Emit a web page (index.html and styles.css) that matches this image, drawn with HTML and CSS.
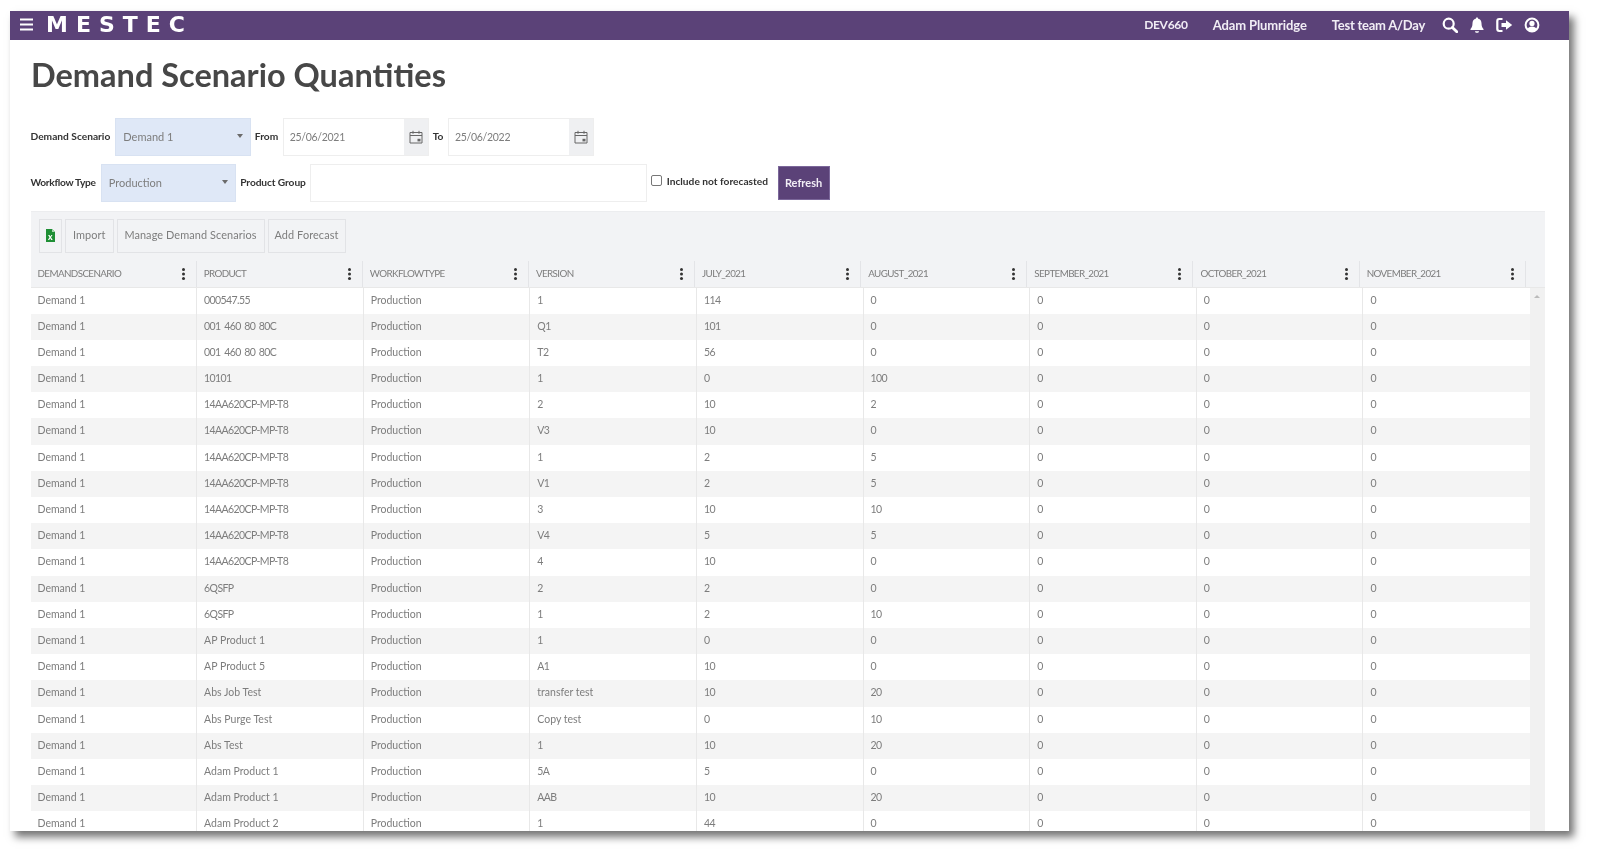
FILE: index.html
```html
<!DOCTYPE html>
<html lang="en">
<head>
<meta charset="utf-8">
<title>Demand Scenario Quantities</title>
<link rel="stylesheet" href="styles.css">
</head>
<body>
<div class="window">
  <header class="topbar">
    <svg class="burger" viewBox="0 0 13 13" width="13" height="13"><path d="M0 1.500h13M0 6.500h13M0 11.500h13" stroke="#fff" stroke-width="2"/></svg>
    <span class="logo">MESTEC</span>
    <nav class="usernav">
      <span class="nav-dev">DEV660</span>
      <span class="nav-user">Adam Plumridge</span>
      <span class="nav-team">Test team A/Day</span>
      <svg class="nav-icon" viewBox="0 0 16 16" width="16" height="16"><circle cx="6.7" cy="6.7" r="5" fill="none" stroke="#fff" stroke-width="2.2"/><path d="M10.4 10.4l4.4 4.4" stroke="#fff" stroke-width="2.8" stroke-linecap="round"/></svg>
      <svg class="nav-icon" viewBox="0 0 16 16" width="16" height="16"><path d="M8 .6c.8 0 1.2.5 1.2 1.2 2.2.5 3.3 2.3 3.3 4.5 0 3 .8 4.500 2 5.700v1H1.500v-1c1.200-1.200 2-2.700 2-5.700 0-2.200 1.100-4 3.300-4.500C6.800 1.100 7.200.6 8 .6zM6 14.200h4c0 1-.9 1.600-2 1.600s-2-.6-2-1.600z" fill="#fff"/></svg>
      <svg class="nav-icon" viewBox="0 0 17 16" width="17" height="16"><path d="M6.500 2H3.200C2 2 1.300 2.700 1.300 3.900v8.200c0 1.200.7 1.900 1.900 1.900h3.300" fill="none" stroke="#fff" stroke-width="2.200"/><path d="M10 3.200l6.200 4.800-6.200 4.800V10H5.500V6H10z" fill="#fff"/></svg>
      <svg class="nav-icon" viewBox="0 0 16 16" width="16" height="16"><circle cx="8" cy="8" r="6.400" fill="none" stroke="#fff" stroke-width="2"/><circle cx="8" cy="6.400" r="2.600" fill="#fff"/><path d="M3.500 12.500c.6-2 2.300-2.900 4.500-2.900s3.900.9 4.500 2.900c-1.200 1.200-2.700 1.800-4.500 1.800s-3.300-.6-4.500-1.800z" fill="#fff"/></svg>
    </nav>
  </header>

  <main class="content">
    <h1 class="title">Demand Scenario Quantities</h1>

    <div class="filter-row filter-row-one">
      <label class="flabel">Demand Scenario</label>
      <div class="select"><span>Demand 1</span><i class="caret"></i></div>
      <label class="flabel">From</label>
      <div class="date"><span class="date-value">25/06/2021</span><span class="date-btn"><svg viewBox="0 0 14 14" width="14" height="14"><path d="M1 2.500h12v10.500H1zM1 5.500h12M4 .8v3M10 .8v3" fill="none" stroke="#666" stroke-width="1"/><rect x="8.500" y="8.800" width="3" height="2.600" fill="#666"/></svg></span></div>
      <label class="flabel">To</label>
      <div class="date"><span class="date-value">25/06/2022</span><span class="date-btn"><svg viewBox="0 0 14 14" width="14" height="14"><path d="M1 2.500h12v10.500H1zM1 5.500h12M4 .8v3M10 .8v3" fill="none" stroke="#666" stroke-width="1"/><rect x="8.500" y="8.800" width="3" height="2.600" fill="#666"/></svg></span></div>
    </div>

    <div class="filter-row filter-row-two">
      <label class="flabel flabel-workflow">Workflow Type</label>
      <div class="select"><span>Production</span><i class="caret"></i></div>
      <label class="flabel flabel-group">Product Group</label>
      <div class="group-input"></div>
      <span class="check-wrap"><i class="check"></i><span class="flabel">Include not forecasted</span></span>
      <button class="refresh">Refresh</button>
    </div>

    <section class="grid">
      <div class="toolbar">
        <button class="tbtn tbtn-icon"><svg viewBox="0 0 9 13" width="9" height="13"><path d="M0 0h6L9 3v10H0z" fill="#1f8f35"/><path d="M6 0l3 3H6z" fill="#a6d8b0"/><path d="M2 6l1.500 2.300L1.900 11h1.300l1-1.700L5.200 11h1.500L5 8.300 6.500 6H5.300l-.9 1.500L3.500 6z" fill="#fff"/></svg></button>
        <button class="tbtn">Import</button>
        <button class="tbtn">Manage Demand Scenarios</button>
        <button class="tbtn">Add Forecast</button>
      </div>
      <div class="ghead">
        <div class="hcell">DEMANDSCENARIO<i class="dots"></i></div>
        <div class="hcell">PRODUCT<i class="dots"></i></div>
        <div class="hcell">WORKFLOWTYPE<i class="dots"></i></div>
        <div class="hcell">VERSION<i class="dots"></i></div>
        <div class="hcell">JULY_2021<i class="dots"></i></div>
        <div class="hcell">AUGUST_2021<i class="dots"></i></div>
        <div class="hcell">SEPTEMBER_2021<i class="dots"></i></div>
        <div class="hcell">OCTOBER_2021<i class="dots"></i></div>
        <div class="hcell">NOVEMBER_2021<i class="dots"></i></div>
      </div>
      <div class="gbody-wrap">
        <div class="gbody" id="gbody"></div>
        <div class="scrollbar"><i class="scroll-up"></i></div>
      </div>
    </section>
  </main>
</div>
<script src="app.js"></script>
</body>
</html>
```
FILE: app.js
```js
var rows = [
["000547.55","1","114","0"],
["001 460 80 80C","Q1","101","0"],
["001 460 80 80C","T2","56","0"],
["10101","1","0","100"],
["14AA620CP-MP-T8","2","10","2"],
["14AA620CP-MP-T8","V3","10","0"],
["14AA620CP-MP-T8","1","2","5"],
["14AA620CP-MP-T8","V1","2","5"],
["14AA620CP-MP-T8","3","10","10"],
["14AA620CP-MP-T8","V4","5","5"],
["14AA620CP-MP-T8","4","10","0"],
["6QSFP","2","2","0"],
["6QSFP","1","2","10"],
["AP Product 1","1","0","0"],
["AP Product 5","A1","10","0"],
["Abs Job Test","transfer test","10","20"],
["Abs Purge Test","Copy test","0","10"],
["Abs Test","1","10","20"],
["Adam Product 1","5A","5","0"],
["Adam Product 1","AAB","10","20"],
["Adam Product 2","1","44","0"]
];
var body = document.getElementById("gbody");
rows.forEach(function (r) {
  var row = document.createElement("div");
  row.className = "grow";
  ["Demand 1", r[0], "Production", r[1], r[2], r[3], "0", "0", "0"].forEach(function (t) {
    var c = document.createElement("div");
    c.className = /^[0-9A-Z .\-]+$/.test(t) ? "gcell gcell-tight" : "gcell";
    c.textContent = t;
    row.appendChild(c);
  });
  body.appendChild(row);
});
```
FILE: styles.css
```css
* { box-sizing: border-box; }
html, body { margin: 0; padding: 0; height: 100%; background: #fff; overflow: hidden; }
body { font-family: "Lato", "Noto Sans", sans-serif; padding: 11px 0 0 10px; }

.window {
  width: 1559px;
  height: 820px;
  background: #fff;
  overflow: hidden;
  box-shadow: 5px 6px 8px rgba(0,0,0,.55);
}

.topbar {
  height: 29px;
  background: #5b4278;
  color: #fff;
  display: flex;
  align-items: center;
  padding: 0 0 2px 10px;
  filter: blur(.3px);
}
.burger { margin-right: 13px; }
.logo { font-family: "DejaVu Sans", sans-serif; font-weight: 700; font-size: 22px; letter-spacing: 8px; line-height: 27px; }
.usernav { margin-left: auto; display: flex; align-items: center; padding-right: 29px; font-size: 13px; font-weight: 700; color: #f1edf5; }
.nav-dev { margin-right: 25px; letter-spacing: -.3px; font-size: 12px; }
.nav-user { margin-right: 25px; letter-spacing: -.1px; }
.nav-team { margin-right: 17px; letter-spacing: -.25px; }
.nav-icon { margin-right: 11px; }
.nav-icon:last-child { margin-right: 0; }

.content { padding: 0 0 0 20.500px; filter: blur(.3px); }
.title { margin: 0; padding: 14px 0 0 .5px; height: 78px; font-size: 32.500px; line-height: 42px; font-weight: 700; color: #474747; font-family: "Lato", sans-serif; }

.filter-row { display: flex; align-items: center; }
.filter-row-one { height: 38px; }
.filter-row-two { height: 38px; margin-top: 8px; }
.flabel { font-size: 10.200px; font-weight: 700; color: #333; white-space: nowrap; padding-bottom: 2px; }
.flabel-workflow { letter-spacing: -.3px; }
.flabel-group { letter-spacing: -.1px; }
.select {
  height: 100%;
  width: 135.500px;
  margin: 0 4px 0 5px;
  padding: 0 7px 2px 7px;
  background: #dfe8f7;
  border: 1px solid #d8e2f2;
  display: flex;
  align-items: center;
  justify-content: space-between;
  font-size: 11px;
  color: #7d7d7d;
}
.caret { width: 0; height: 0; border-left: 3.500px solid transparent; border-right: 3.500px solid transparent; border-top: 4.500px solid #6b6b6b; }
.date {
  height: 100%;
  width: 146.500px;
  margin: 0 3.500px 0 4.500px;
  display: flex;
  border: 1px solid #eee;
  font-size: 10.500px;
  color: #7d7d7d;
}
.filter-row-one .date:last-child { margin-right: 0; }
.date-value { flex: 1; display: flex; align-items: center; padding: 0 0 1px 6px; letter-spacing: -.3px; }
.date-btn { width: 24px; background: #eff0f2; display: flex; align-items: center; justify-content: center; }
.group-input { height: 100%; width: 337px; margin-left: 4.500px; border: 1px solid #eee; }
.check-wrap { display: flex; align-items: center; margin-left: 4px; margin-top: -3px; }
.check { display: block; width: 11px; height: 11px; border: 1px solid #777; border-radius: 2px; background: #fff; margin-right: 4.500px; margin-top: -3px; }
.refresh {
  width: 52px;
  height: 34px;
  margin-left: 9.500px;
  background: #5b4278;
  color: #f1edf5;
  border: 1px solid #7b679a;
  font: 700 11px "Lato", sans-serif;
  padding: 0 0 2px;
}

.grid { margin-top: 8.500px; width: 1514.500px; }
.toolbar { height: 50px; background: #f2f3f5; border-top: 1px solid #ecedef; padding: 7.500px 0 0 8.500px; display: flex; gap: 3px; }
.tbtn { height: 33.500px; padding: 0 0 2px; background: #f2f3f5; border: 1px solid #e2e3e6; font: 400 10.900px "Lato", sans-serif; color: #7d7d7d; white-space: nowrap; letter-spacing: .1px; }
.tbtn-icon { width: 23px; padding: 0; display: flex; align-items: center; justify-content: center; }
.tbtn:nth-child(2) { width: 48.500px; }
.tbtn:nth-child(3) { width: 148px; }
.tbtn:nth-child(4) { width: 78px; }

.ghead { display: grid; grid-template-columns: repeat(9, 166.150px) 1fr; height: 27px; background: #f2f3f5; border-bottom: 1px solid #e8e8e8; }
.hcell { position: relative; border-right: 1px solid #e3e4e7; padding-left: 7px; font-size: 9.800px; line-height: 25px; color: #7d7d7d; letter-spacing: -.6px; }
.dots { position: absolute; right: 11px; top: 7px; width: 3px; height: 3px; background: #333; border-radius: 50%; box-shadow: 0 4.500px 0 #333, 0 9px 0 #333; }

.gbody-wrap { display: flex; }
.gbody { width: 1499.500px; flex: none; }
.grow { display: grid; grid-template-columns: repeat(9, 1fr); height: 26.200px; }
.grow:nth-child(even) { background: #f4f4f4; }
.gcell { padding-left: 7px; font-size: 10.500px; line-height: 25.400px; color: #7d7d7d; border-right: 1px solid #e8e8e8; white-space: nowrap; overflow: hidden; }
.gcell-tight { letter-spacing: -.6px; word-spacing: 1.500px; }
.gcell:last-child { border-right: 0; }
.scrollbar { flex: 1; background: #f1f1f1; position: relative; }
.scroll-up { position: absolute; left: 4px; top: 7px; width: 0; height: 0; border-left: 3px solid transparent; border-right: 3px solid transparent; border-bottom: 3px solid #bbb; }
```
